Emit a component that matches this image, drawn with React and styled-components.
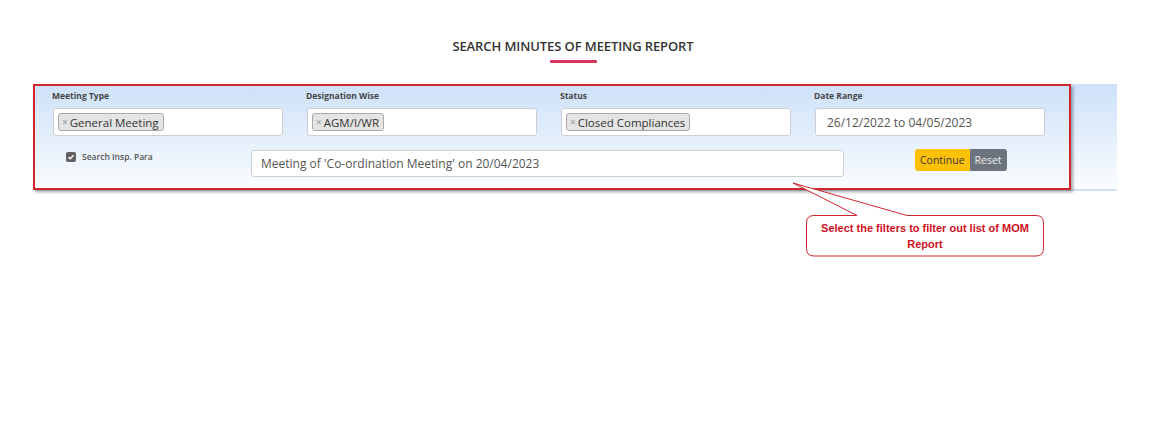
import React from 'react';
import styled, { createGlobalStyle } from 'styled-components';

const GlobalStyle = createGlobalStyle`
    html, body {
        margin: 0;
        padding: 0;
        background: #fff;
    }
    body {
        font-family: 'Open Sans', 'Noto Sans', sans-serif;
        color: #333;
    }
`;

const Page = styled.div`
    position: relative;
    width: 1161px;
    height: 442px;
    padding-top: 38px;
    box-sizing: border-box;
`;

const Header = styled.div`
    display: flex;
    flex-direction: column;
    align-items: center;
    width: 1146px;
    h2 {
        margin: 0;
        font-size: 13px;
        line-height: 16px;
        font-weight: 600;
        color: #333;
        letter-spacing: -0.1px;
    }
    .bar {
        width: 47px;
        height: 3px;
        margin-top: 6px;
        background: #d9345a;
        border-radius: 1px;
    }
`;

const Frame = styled.div`
    position: relative;
    margin: 21px 0 0 35px;
    width: 1082px;
`;

const Panel = styled.div`
    background: linear-gradient(180deg, #cde1f9 0%, #e6f0fc 55%, #fbfdff 100%);
    border-bottom: 2px solid #cfe2f6;
    padding: 6px 0 12px 17px;
    box-sizing: border-box;
    height: 107px;
`;

const RedBox = styled.div`
    position: absolute;
    left: -2px;
    top: 0;
    width: 1038px;
    height: 106px;
    box-sizing: border-box;
    border: 2px solid #d0262d;
    box-shadow: 2px 2px 3px rgba(0, 0, 0, 0.35);
    pointer-events: none;
`;

const FieldGrid = styled.div`
    display: grid;
    grid-template-columns: repeat(4, 231px);
    column-gap: 23px;
`;

const Field = styled.div`
    display: flex;
    flex-direction: column;
    label {
        font-size: 8.5px;
        line-height: 12px;
        font-weight: 700;
        color: #454545;
        margin-bottom: 6px;
    }
`;

const Box = styled.div`
    display: flex;
    align-items: center;
    height: 28px;
    box-sizing: border-box;
    margin-left: 1px;
    padding: 0 4px;
    background: #fff;
    border: 1px solid #cfcfcf;
    border-radius: 3px;
    font-size: 12px;
    color: #555;
`;

const Plain = styled.span`
    padding-left: 7px;
`;

const Chip = styled.span`
    display: inline-flex;
    align-items: center;
    height: 18px;
    box-sizing: border-box;
    padding: 0 4px 0 3px;
    background: #e4e4e4;
    border: 1px solid #aaa;
    border-radius: 3px;
    font-size: 11.5px;
    color: #333;
    .x {
        color: #999;
        font-size: 10px;
        margin-right: 2px;
    }
`;

const SecondRow = styled.div`
    display: flex;
    align-items: flex-start;
    margin-top: 14px;
`;

const CheckLabel = styled.div`
    display: flex;
    align-items: center;
    gap: 6px;
    width: 185px;
    margin-left: 14px;
    margin-top: 1px;
    font-size: 8.5px;
    color: #555;
    font-weight: 600;
`;

const Check = styled.span`
    width: 10px;
    height: 10px;
    border-radius: 2px;
    background: #5f5f5f;
    display: inline-flex;
    align-items: center;
    justify-content: center;
`;

const TextBox = styled(Box)`
    width: 593px;
    height: 27px;
    margin-left: 0;
    padding-left: 9px;
`;

const Buttons = styled.div`
    display: flex;
    margin-left: 71px;
    margin-top: -1px;
`;

const Button = styled.button`
    height: 22px;
    padding: 0 ${(p) => p.$pad}px;
    border: none;
    font-family: 'Open Sans', sans-serif;
    font-size: 10.5px;
    background: ${(p) => p.$bg};
    color: ${(p) => p.$color};
    border-radius: ${(p) => p.$radius};
    cursor: pointer;
`;

const Callout = styled.div`
    position: absolute;
    left: 790px;
    top: 180px;
    width: 260px;
    height: 80px;
    svg {
        position: absolute;
        left: 0;
        top: 0;
    }
`;

const CalloutText = styled.div`
    position: absolute;
    left: 16px;
    top: 40px;
    width: 238px;
    text-align: center;
    font-family: 'Liberation Sans', Arial, sans-serif;
    font-weight: 700;
    font-size: 11px;
    line-height: 16px;
    color: #d0101e;
`;

const fields = [
    { label: 'Meeting Type', chip: 'General Meeting' },
    { label: 'Designation Wise', chip: 'AGM/I/WR' },
    { label: 'Status', chip: 'Closed Compliances' },
    { label: 'Date Range', text: '26/12/2022 to 04/05/2023' },
];

const App = () => {
    return (
        <>
            <GlobalStyle />
            <Page>
                <Header>
                    <h2>SEARCH MINUTES OF MEETING REPORT</h2>
                    <div className="bar"></div>
                </Header>
                <Frame>
                    <Panel>
                        <FieldGrid>
                            {fields.map((f) => (
                                <Field key={f.label}>
                                    <label>{f.label}</label>
                                    <Box>
                                        {f.chip ? (
                                            <Chip>
                                                <span className="x">×</span>
                                                {f.chip}
                                            </Chip>
                                        ) : (
                                            <Plain>{f.text}</Plain>
                                        )}
                                    </Box>
                                </Field>
                            ))}
                        </FieldGrid>
                        <SecondRow>
                            <CheckLabel>
                                <Check>
                                    <svg width="8" height="8" viewBox="0 0 8 8">
                                        <path d="M1.5 4.2 L3.2 5.8 L6.6 2.2" fill="none" stroke="#fff" strokeWidth="1.4" />
                                    </svg>
                                </Check>
                                Search Insp. Para
                            </CheckLabel>
                            <TextBox>Meeting of 'Co-ordination Meeting' on 20/04/2023</TextBox>
                            <Buttons>
                                <Button $bg="#ffc107" $color="#333" $pad={5} $radius="3px 0 0 3px">Continue</Button>
                                <Button $bg="#6c757d" $color="#eee" $pad={5} $radius="0 3px 3px 0">Reset</Button>
                            </Buttons>
                        </SecondRow>
                    </Panel>
                    <RedBox />
                </Frame>
                <Callout>
                    <svg width="260" height="80" viewBox="0 0 260 80">
                        <path
                            d="M3 3 L67 35.5 L24 35.5 Q16.5 35.5 16.5 43 L16.5 68.5 Q16.5 76 24 76 L246 76 Q253.5 76 253.5 68.5 L253.5 43 Q253.5 35.5 246 35.5 L117 35.5 Z"
                            fill="#fff"
                            stroke="#d0262d"
                            strokeWidth="1"
                        />
                    </svg>
                    <CalloutText>
                        Select the filters to filter out list of MOM
                        <br />
                        Report
                    </CalloutText>
                </Callout>
            </Page>
        </>
    );
};

export default App;
